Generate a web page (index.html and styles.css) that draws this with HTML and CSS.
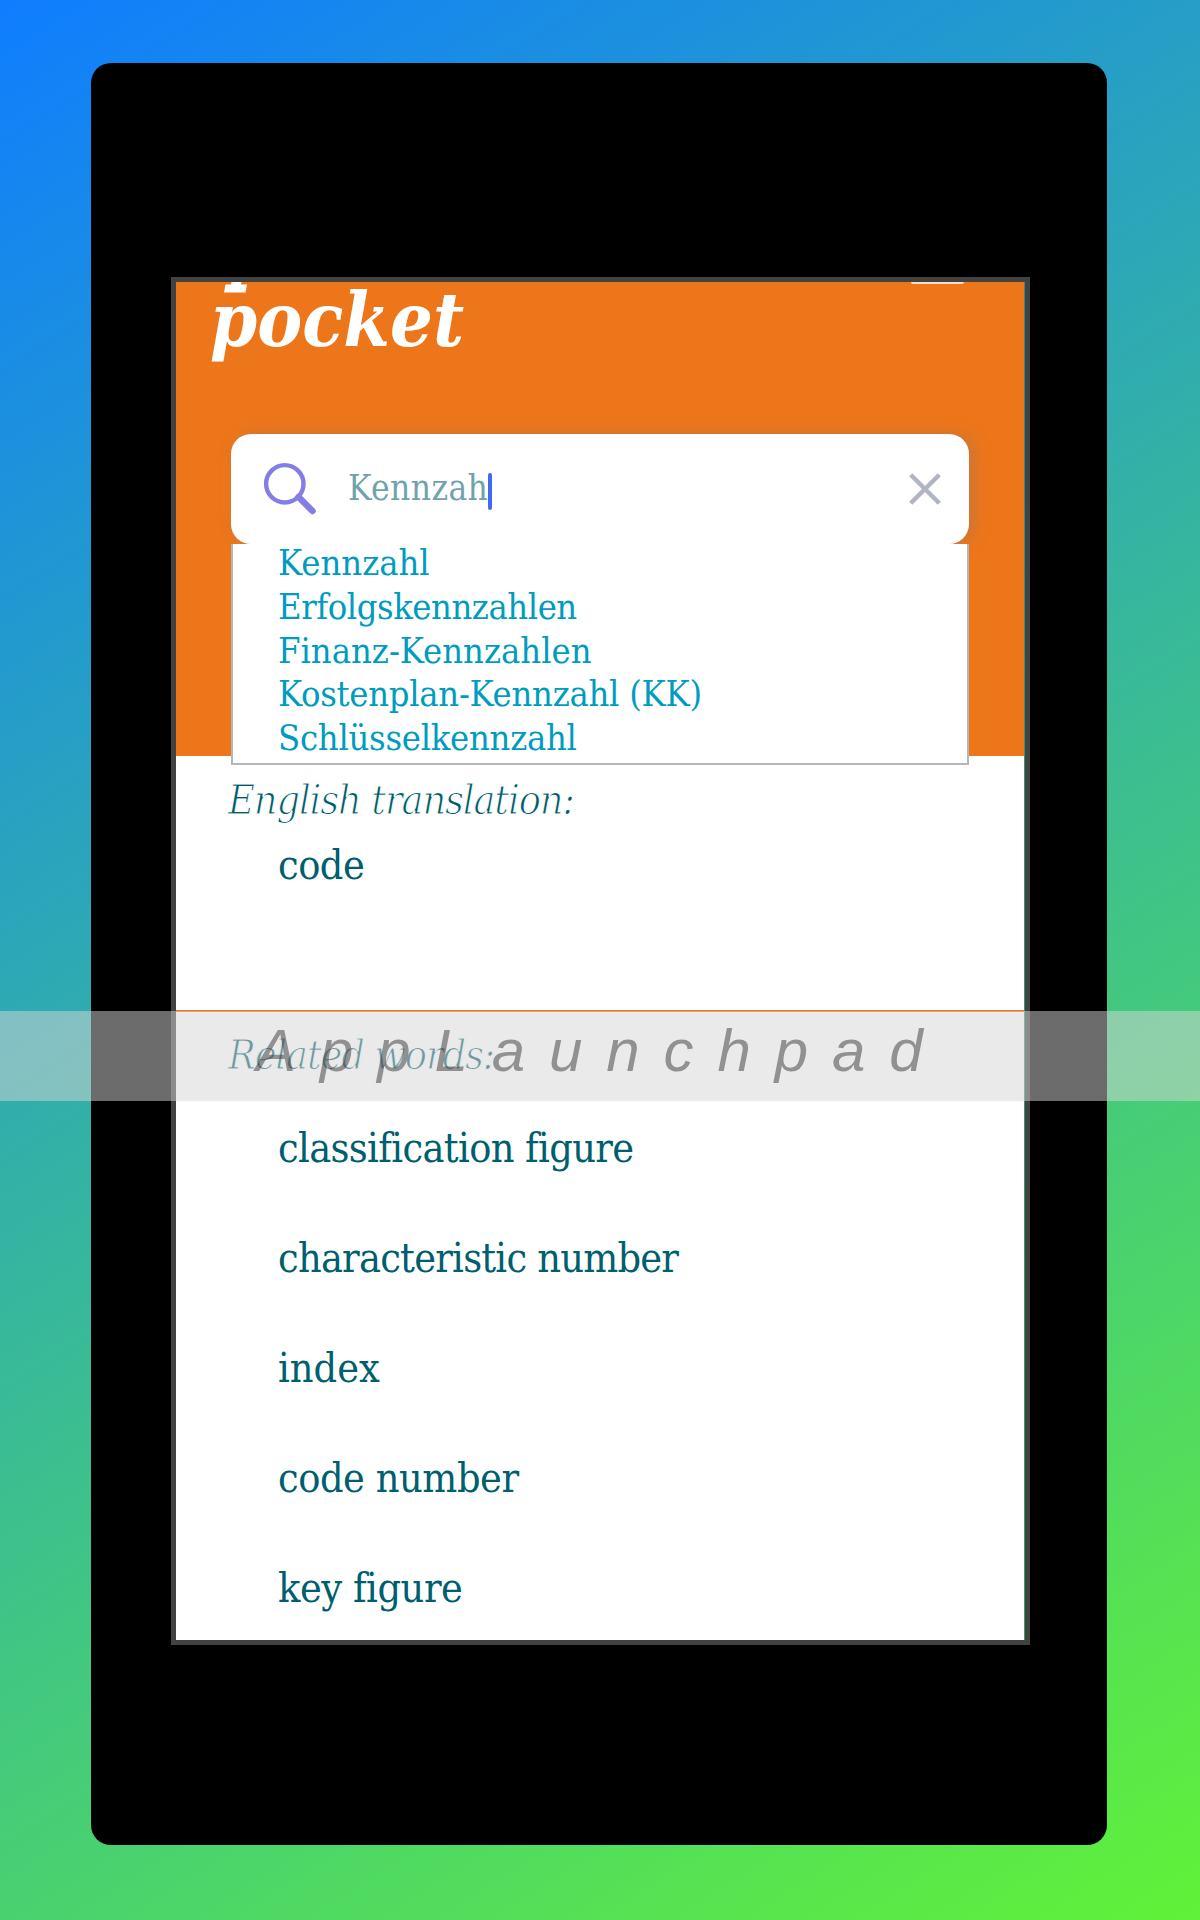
FILE: index.html
```html
<!DOCTYPE html>
<html lang="de">
<head>
<meta charset="utf-8">
<title>Pocket</title>
<link rel="stylesheet" href="styles.css">
</head>
<body>
<div class="device">
  <main class="screen">
    <header class="header">
      <div class="topbar">
        <div class="logo">
          <svg class="logo-foot" width="24" height="11" viewBox="0 0 24 11"><path fill="#fff" d="M7.500 0H17.500L17 2.500H23L21.500 10.500H0L1.500 2.500H7Z"/></svg>
          <span class="wordmark">pocket</span>
        </div>
        <span class="menu-bar"></span>
      </div>
      <div class="search">
        <svg class="search-icon" width="54" height="54" viewBox="0 0 54 54" fill="none" stroke="#837ee6"><circle cx="21.800" cy="21.800" r="18.700" stroke-width="4.400"/><path d="M35.500 35L49.500 49" stroke-width="6.500" stroke-linecap="round"/></svg>
        <span class="query">Kennzah</span><span class="caret"></span>
        <svg class="clear" width="32" height="32" viewBox="0 0 32 32" stroke="#b1b5c3" stroke-width="4.400"><path d="M1.700 1.700L30.300 30.300M30.300 1.700L1.700 30.300"/></svg>
      </div>
      <ul class="suggestions">
        <li>Kennzahl</li>
        <li class="tight">Erfolgskennzahlen</li>
        <li>Finanz-Kennzahlen</li>
        <li class="snug">Kostenplan-Kennzahl (KK)</li>
        <li class="snug">Schlüsselkennzahl</li>
      </ul>
    </header>
    <section class="translation">
      <h2>English translation:</h2>
      <p>code</p>
    </section>
    <section class="related">
      <h2>Related words:</h2>
      <ul class="words">
        <li class="narrow">classification figure</li>
        <li class="narrower">characteristic number</li>
        <li>index</li>
        <li class="tight">code number</li>
        <li class="tight">key figure</li>
      </ul>
    </section>
  </main>
</div>
<div class="watermark">AppLaunchpad</div>
</body>
</html>
```
FILE: styles.css
```css
* { box-sizing: border-box; margin: 0; padding: 0; }
body {
  position: relative;
  width: 1200px;
  height: 1920px;
  padding: 63px 93.500px 0 91px;
  overflow: hidden;
  background: linear-gradient(148deg, #0f7dff, #60f238);
  font-family: "DejaVu Serif Condensed", "DejaVu Serif", serif;
  font-stretch: condensed;
}
ul { list-style: none; }
.device {
  height: 1782px;
  padding: 214px 77px 0 80px;
  border-radius: 20px;
  background: #000;
}
.screen {
  display: flex;
  flex-direction: column;
  height: 1368px;
  padding-right: 1px;
  border: 5px solid #424242;
  background: linear-gradient(#2b8f8c, #35a35a);
  overflow: hidden;
}
.header {
  flex: none;
  height: 474px;
  padding: 0 55px;
  background: #ee761a;
}
.topbar {
  display: flex;
  justify-content: space-between;
  height: 152px;
  margin: 0 5px 0 -20px;
}
.logo-foot { display: block; margin-left: 13px; }
.wordmark {
  display: block;
  margin: -18px 0 0 -1px;
  color: #fff;
  font-size: 75px;
  line-height: 90px;
  font-weight: bold;
  font-style: italic;
}
.menu-bar { width: 53px; height: 2px; background: #f9dcc4; border-radius: 0 0 2px 2px; }
.search {
  display: flex;
  align-items: center;
  height: 110px;
  padding: 0 28px 0 32px;
  border-radius: 20px;
  background: #fff;
  box-shadow: 5px 0 16px rgba(120, 120, 120, .35);
}
.search-icon, .clear { margin-top: -1px; }
.query { margin: -2px 0 0 31px; color: #6fa3ab; font-size: 35px; letter-spacing: .4px; }
.caret { width: 4px; height: 37px; margin-top: 5px; border-radius: 2px; background: #4169f1; }
.clear { margin-left: auto; }
.suggestions {
  display: flex;
  flex-direction: column;
  position: relative;
  height: 221px;
  padding-left: 45px;
  border: 2px solid #b7b7b7;
  border-top: 0;
  background: #fff;
  color: #009cc0;
  font-size: 36px;
  line-height: 43.800px;
}
.suggestions li:first-child { margin-top: -3px; }
.snug { letter-spacing: -.27px; }
.tight { letter-spacing: -.45px; }
.narrow { letter-spacing: -.63px; }
.narrower { letter-spacing: -.76px; }
.translation {
  flex: none;
  height: 256px;
  padding: 19px 52px 0;
  border-bottom: 2px solid #ee761a;
  background: #fff;
}
h2 {
  color: #005c6b;
  font-size: 41px;
  line-height: 50px;
  font-weight: normal;
  font-style: italic;
  letter-spacing: -1.120px;
  -webkit-text-stroke: 1px #fff;
}
p, .words { padding-left: 50px; color: #005f6e; font-size: 41px; }
p { margin-top: 10px; line-height: 60px; letter-spacing: -.5px; }
.related { flex: 1; padding: 18px 52px 0; background: #fff; }
.words { padding-top: 13px; }
.words li { height: 110px; line-height: 110px; }
.watermark {
  position: absolute;
  left: 0;
  top: 1011px;
  width: 1200px;
  height: 90px;
  padding-left: 256px;
  background: rgba(213, 213, 213, .506);
  color: rgba(57, 55, 55, .5);
  font: italic 60px/80px "Liberation Sans", Arial, sans-serif;
  letter-spacing: 23.900px;
  white-space: nowrap;
}
```
